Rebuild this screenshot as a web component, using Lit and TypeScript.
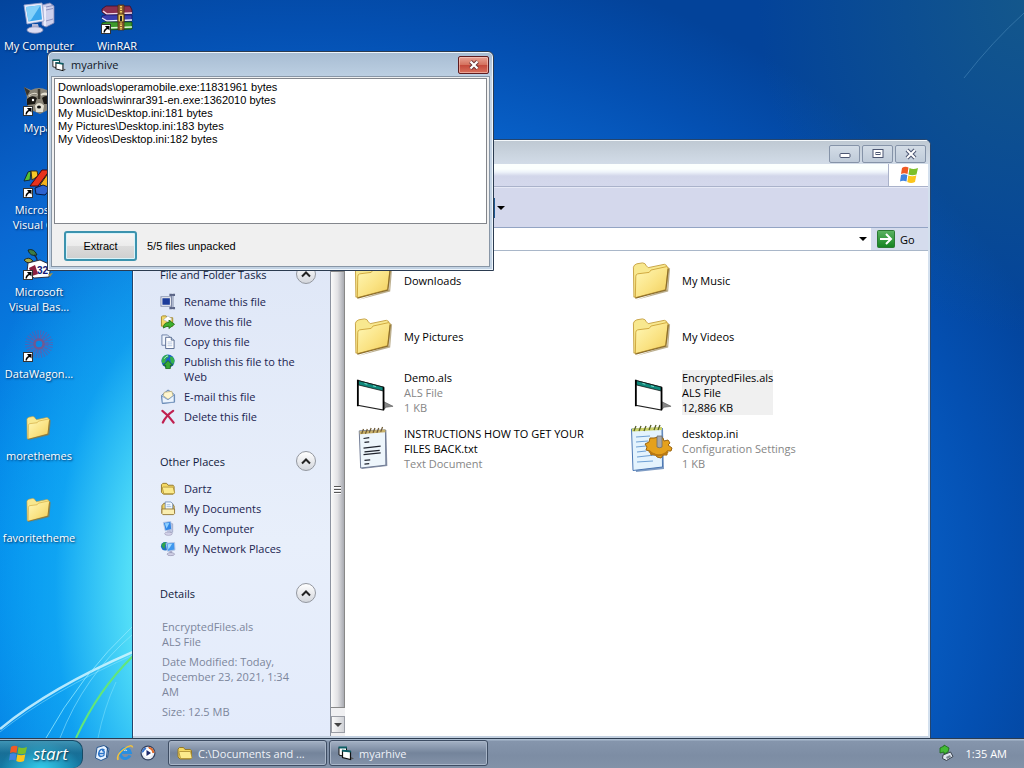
import { LitElement, html, css, svg, nothing } from "lit";
import { customElement, property, state } from "lit/decorators.js";
import { classMap } from "lit/directives/class-map.js";

/* ---------- icon drawings ---------- */

const folderBig = svg`
  <defs><linearGradient id="fb" x1="0" y1="0" x2="1" y2="1">
    <stop offset="0" stop-color="#fff8b8"/><stop offset=".55" stop-color="#fae384"/><stop offset="1" stop-color="#f0cc58"/>
  </linearGradient></defs>
  <path d="M4 43 L38 34 L40 10 L37 8 L37 32 Z" fill="#8f7a45" opacity=".6"/>
  <path d="M2 40 L1.500 8.500 Q2 6 5 5 L11 4 Q14 4 15 7 L17 9 L34 5.500 Q37 6 37 9 L35 31 Z" fill="#f8e88f" stroke="#c7a244" stroke-width="1"/>
  <path d="M3.500 40.500 L4 18 Q4 16 6 15.500 L18 14 L20 11.500 L36 8 Q38 8 38 10 L35.500 32 Z" fill="url(#fb)" stroke="#cfa63c" stroke-width="1"/>
  <path d="M3.500 41 L35.500 32.500 L38 10" fill="none" stroke="#8c6e2c" stroke-width="1.300"/>`;

const icons: Record<string, { box: string; art: unknown }> = {
  folder: { box: "0 0 42 45", art: folderBig },
  als: {
    box: "0 0 42 45",
    art: svg`
      <path d="M31 32 L41 37 L34 38 L31 40 Z" fill="#888" stroke="#555" stroke-width=".6"/>
      <path d="M4 10 L31 17 V41 L4 36 Z" fill="#fff" stroke="#222" stroke-width="1.200"/>
      <path d="M4.500 10 L31 17 V21 L4.500 14.500 Z" fill="#10897c" stroke="#111" stroke-width=".8"/>
      <path d="M11 13 l3 .8 M20 15.500 l3 .8" stroke="#7fe0d0" stroke-width="1"/>
      <path d="M4 9 V37 M31 17 V41" stroke="#000" stroke-width="1.800"/>`,
  },
  txt: {
    box: "0 0 42 45",
    art: svg`
      <path d="M7 4 L34 3 L35 41 L8 44 Z" fill="#8a93a8"/>
      <path d="M5.500 4 L33 3 L33.500 40 L7 43 Z" fill="#eef6fc" stroke="#6a7690"/>
      <path d="M6 6 L33 4" stroke="#c8b069" stroke-width="3"/>
      <path d="M8 7 l2 -5 M12 7 l2 -5 M16 6 l2 -5 M20 6 l2 -5 M24 6 l2 -5 M28 5 l2 -5" stroke="#6d5a36" stroke-width="1.300"/>
      <path d="M10 12 l6 -1 M11 16 l5 -.5 M10 22 l18 -2 M11 26 l16 -1.500 M10 29 l18 -2 M11 35 l6 -.5 M11 39 l5 -.5" stroke="#20242e" stroke-width="1.300"/>`,
  },
  ini: {
    box: "0 0 46 48",
    art: svg`
      <path d="M4 5 L34 4 L35 45 L7 48 Z" fill="#7f9cc4"/>
      <path d="M2.500 5 L33 4 L33.500 43 L4 46.500 Z" fill="#e4f3fd" stroke="#4c78b4"/>
      <path d="M3 6 L33 4.500" stroke="#cdd46a" stroke-width="3"/>
      <path d="M5 7 l2 -5 M10 7 l2 -5 M15 7 l2 -5 M20 6 l2 -5 M25 6 l2 -5 M29 6 l2 -5" stroke="#58602a" stroke-width="1.300"/>
      <path d="M7 13 l14 -1 M7 18 l12 -1 M7 23 l10 -1 M8 28 l9 -1 M8 33 l18 -2 M8 38 l16 -1" stroke="#6fa0d4" stroke-width="1.200"/>
      <path d="M30 13 l4 1 1 3 4 -1 2 3 -2 2 4 3 -1 3 -4 0 0 4 -4 0 -2 3 -4 -1 -2 -3 -4 1 -1 -4 -4 -1 1 -3 -2 -3 4 -2 1 -4 4 0 Z" fill="#e5a11c" stroke="#9a6410"/>
      <path d="M20 27 q8 8 19 1" stroke="#b87812" stroke-width="2" fill="none"/>
      <path d="M28 12 h5 v11 q-2.500 1.500 -5 0 Z" fill="#a9a9a9" stroke="#6c6c6c" stroke-width=".8"/>`,
  },
  rename: {
    box: "0 0 16 16",
    art: svg`<rect x=".5" y="3" width="11" height="10" fill="#fff" stroke="#7f8aa8"/><rect x="2" y="4.500" width="8" height="7" fill="#1c3c9a"/>
      <path d="M9.500 1 h2 l1 1 1 -1 h2 M12.500 2 v12 M9.500 15 h2 l1 -1 1 1 h2" fill="none" stroke="#5b6587" stroke-width="2.400"/>
      <path d="M12.500 2 v12" stroke="#d8def0" stroke-width="1"/>`,
  },
  move: {
    box: "0 0 16 16",
    art: svg`<path d="M1 13 V3 l1 -1 h4 l1 2 h6 v9 Z" fill="#f1d766" stroke="#a58a2c"/><path d="M3 6 L8 2 l4 3 -3 4 Z" fill="#fff" stroke="#9aa4b4" stroke-width=".6"/>
      <path d="M3 15 q0 -6 6 -6 v-2.500 l6 4.500 -6 4.500 V13 q-3 0 -6 2 Z" fill="#3fb02e" stroke="#19640f" stroke-width=".8"/>`,
  },
  copy: {
    box: "0 0 16 16",
    art: svg`<path d="M1.500 1 h6 l2 2 v9 h-8 Z" fill="#eef4fd" stroke="#6c7fa4"/><path d="M5.500 3.500 h6 l3 3 v9 h-9 Z" fill="#fff" stroke="#54678e"/>
      <path d="M11.500 3.500 v3 h3" fill="#cfdcf0" stroke="#54678e"/><path d="M7.500 8.500 h5 M7.500 10.500 h5 M7.500 12.500 h5" stroke="#b3c4df"/>`,
  },
  globe: {
    box: "0 0 16 16",
    art: svg`<circle cx="8" cy="7.500" r="7" fill="#1e62c8"/><path d="M2 4 q3 -4 6 -3 l1 2 -3 2 -1 4 -3 1 q-1.500 -3 0 -6 Z M10 3 l3 0 2 4 -1 4 -3 -2 Z" fill="#35b24a"/>
      <path d="M4 5 q2 -3 4 -3" stroke="#b8e8ff" fill="none"/><path d="M8 7 l5 5 h-2.500 v3.500 h-5 V12 H3 Z" fill="#36a832" stroke="#125f12" stroke-width=".8"/>`,
  },
  mail: {
    box: "0 0 16 16",
    art: svg`<path d="M1 7 L8 1 l7 5 v8 L2 15.500 Z" fill="#c7dcf5" stroke="#5a7fae"/><path d="M3 7 l1 -3.500 8 -1 1.500 5 L8 11 Z" fill="#fff6cf" stroke="#b0a06a" stroke-width=".7"/>
      <path d="M1.500 7.500 L8 11.500 l6.500 -5 V14 L2 15 Z" fill="#eaf3fd" stroke="#6b8cb8" stroke-width=".8"/>`,
  },
  delete: {
    box: "0 0 16 16",
    art: svg`<path d="M2 2 Q9 7 14 14.500 M13.500 2 Q6 7 2.500 14.500" fill="none" stroke="#c02050" stroke-width="2.400" stroke-linecap="round"/>`,
  },
  folderSmall: {
    box: "0 0 16 16",
    art: svg`<path d="M1 12 V4 l1.500 -1.500 h4 L8 4.500 h5.500 L14.500 6 v7 l-1 1 H3 Z" fill="#f4d964" stroke="#93782a"/>
      <path d="M3.500 13.500 L2 7.500 q0 -1 1 -1 h10.500 l1.500 6 -1 1 Z" fill="#fbea8c" stroke="#a88a30" stroke-width=".8"/>`,
  },
  documents: {
    box: "0 0 16 16",
    art: svg`<path d="M1.500 13 V5 l2 -2.500 h9 l2 3 V13 Z" fill="#eccf62" stroke="#8a7030"/><path d="M5 10 V1 h6 l2 2 v8 Z" fill="#f6fbff" stroke="#6d8cba" stroke-width=".9"/>
      <path d="M6.500 4 h4 M6.500 6 h5" stroke="#9dbbe2"/><path d="M1.500 8.500 h13.500 v5 l-1 1 H2.500 l-1 -1 Z" fill="#faeeb0" stroke="#94793a"/>`,
  },
  computerSmall: {
    box: "0 0 16 16",
    art: svg`<path d="M9 2 l4 1 v9 l-3 1 Z" fill="#c2c8e2" stroke="#8a90b0" stroke-width=".6"/><path d="M3 1.500 l8 -1 1 8.500 -7 1.500 Z" fill="#2f86e6" stroke="#b9c7e4"/>
      <path d="M4.500 2.500 l5 -.5 -3 6 Z" fill="#8fd0ff"/><ellipse cx="8.500" cy="13.500" rx="4" ry="1.800" fill="#d6d4ea" stroke="#8f8dab" stroke-width=".6"/><path d="M7 10 h3 v3 h-3 Z" fill="#b9bbd6"/>`,
  },
  network: {
    box: "0 0 16 16",
    art: svg`<circle cx="5" cy="5.500" r="4.500" fill="#1d6fc4"/><path d="M1 5 q1 -4 5 -3.500 l-1 3 -1 4 Z" fill="#2fa54a"/>
      <path d="M6 2.500 l9 -1 .5 8 -8 1.500 Z" fill="#3f97ee" stroke="#b7c5e2"/><path d="M7.500 3.500 l5 -.5 -4 6 Z" fill="#a4dcff"/><path d="M9.500 10.500 h3 v3 h-3 Z" fill="#aeb0cc"/><ellipse cx="11" cy="14" rx="4" ry="1.600" fill="#d0d0e6" stroke="#8886a4" stroke-width=".6"/>`,
  },
  form: {
    box: "0 0 16 16",
    art: svg`<path d="M1 2.500 H8.500 V12 L1 10 Z" fill="#fff" stroke="#111"/><path d="M4.500 5.500 L12.500 6.500 V14.500 L4.500 12.500 Z" fill="#fff" stroke="#111" stroke-width="1.200"/>
      <path d="M.5 2.500 h8.500 M4 5.500 l9 1.200" stroke="#0c5f66" stroke-width="1.800"/><path d="M13 12 l3 1.500 -3 1 Z" fill="#555"/>`,
  },
  flag: {
    box: "0 0 20 20",
    art: svg`<path d="M3 3 Q6 1 9.500 2.500 L8.500 9 Q5 7.500 2 9 Z" fill="#f05a24"/><path d="M10.500 3 Q14 5 19 3 L17.500 9.500 Q13 11 9.500 9.500 Z" fill="#7bbf2a"/>
      <path d="M2 10 Q5 8.500 8.300 10 L7.500 16.500 Q4 15 1 16.500 Z" fill="#3f83e0"/><path d="M9.300 10.500 Q13 12 17.300 10.500 L16 17 Q12 19 8.300 17 Z" fill="#fbc51c"/>`,
  },
  mailDoc: {
    box: "0 0 16 16",
    art: svg`<path d="M3 2.500 L10 .5 l5 3 -1.500 9 L7 15.500 1.500 13 Z" fill="#e8f3ff" stroke="#2a5a94"/><path d="M10.500 5 q-3 -2 -5 1 q-2 4 1 5.500 q3 0 4 -2 M5.500 8.500 h4.500 q1 -3 -2 -3" fill="none" stroke="#2c74c8" stroke-width="1.500"/><path d="M12 1.500 l1.500 2 -1 9" fill="none" stroke="#274f80" stroke-width="1.200"/>`,
  },
  ie: {
    box: "0 0 16 16",
    art: svg`<path d="M13 10.500 a5 5 0 1 1 .3 -3 H5" fill="none" stroke="#2a8fe0" stroke-width="3"/><path d="M7 5.500 q1.500 -1 3 0" stroke="#c8ecff" fill="none"/><path d="M1 15 Q-1 10 7 4 Q15 -1.500 15.500 2.500" fill="none" stroke="#f3c23a" stroke-width="1.500"/>`,
  },
  player: {
    box: "0 0 16 16",
    art: svg`<circle cx="8" cy="8" r="7.500" fill="#33415f"/><circle cx="8" cy="8" r="6.300" fill="#e9edf6"/><path d="M8 1.700 a6.300 6.300 0 0 1 6.300 6.300 h-3 Z" fill="#e06a2a"/><path d="M1.700 8 a6.300 6.300 0 0 1 4 -5.800 l1 3 Z" fill="#3d78d0"/>
      <circle cx="8" cy="8" r="4.300" fill="#fff"/><path d="M6.500 5 L11 8 l-4.500 3 Z" fill="#1d2a6c"/>`,
  },
  usb: {
    box: "0 0 16 16",
    art: svg`<path d="M5 10 l7.500 -3 2.500 4.500 -6.500 4 -4 -2 Z" fill="#dfe6ee" stroke="#39414c"/><path d="M8 12 l4 -2 1 2 -4 2 Z" fill="#7c8792"/><path d="M2 8 V3 L6 1 V0 L11 3 10 7 6 9 V7 Z" fill="#43bb35" stroke="#1b6a15" stroke-width=".8"/>`,
  },
  go: {
    box: "0 0 18 18",
    art: svg`<defs><linearGradient id="gg" x1="0" y1="0" x2="0" y2="1"><stop offset="0" stop-color="#5db463"/><stop offset="1" stop-color="#138320"/></linearGradient></defs>
      <rect x=".5" y=".5" width="17" height="17" rx="1" fill="url(#gg)" stroke="#2b7a33"/><path d="M3 9 h11 M9 4 l5 5 -5 5" fill="none" stroke="#fff" stroke-width="2"/>`,
  },
  computer: {
    box: "0 0 32 32",
    art: svg`<path d="M19 3 L27 1 l4 3 v17 l-8 4 -4 -2 Z" fill="#cdd0ec" stroke="#8186b4" stroke-width=".8"/><path d="M23 5 l7 -1.500 M23 8 l7 -1.500 M23 19 l7 -2" stroke="#8d92bf"/>
      <path d="M22 5 V24" stroke="#f4f5ff" stroke-width="1.500"/><path d="M1 3 L19 1 l2 18 -17 3 Z" fill="#e9ecfb" stroke="#9aa4cc" stroke-width=".8"/><path d="M3 5 L17.500 3.300 19 17.500 5.500 19.500 Z" fill="#3aa6ec"/><path d="M3 5 L17.500 3.300 8 18 5.500 19.500 Z" fill="#86d2fa"/>
      <path d="M9 22 h6 l1 4 h-7 Z" fill="#b4b7d6"/><ellipse cx="12" cy="28" rx="8" ry="3.200" fill="#dcdcf2" stroke="#9093b8" stroke-width=".8"/>`,
  },
  winrar: {
    box: "0 0 32 32",
    art: svg`<path d="M1 7 L5 4 H29 L31 8 V12 L5 13 1 10 Z" fill="#8a3050" stroke="#3c0d28" stroke-width=".8"/><path d="M2 9 l4 3 L31 11" stroke="#f0d8e8" fill="none" stroke-width="1.500"/>
      <path d="M1 14 L5 13 H31 V19 L6 20 1 17 Z" fill="#3b3fae" stroke="#14186c" stroke-width=".8"/><path d="M1 16 l5 3 L31 18" stroke="#e6ecff" fill="none" stroke-width="1.300"/>
      <path d="M1 21 L5 20 H31 V27 L6 28 1 25 Z" fill="#3d9a2c" stroke="#16480e" stroke-width=".8"/><path d="M1 23 l5 3 L31 25" stroke="#d8f5d0" fill="none" stroke-width="1.300"/>
      <path d="M17 3 h6 v25 h-6 Z" fill="#8a5a30" stroke="#4e3010" stroke-width=".8"/><path d="M20 4 v8 M20 20 v8" stroke="#f0d060" stroke-width="2" stroke-dasharray="1.500 1"/><rect x="17" y="12" width="6" height="8" rx="1" fill="#e8c860" stroke="#4e3010"/><rect x="19" y="14" width="2" height="5" fill="#222"/>`,
  },
  raccoon: {
    box: "0 0 32 32",
    art: svg`<path d="M1 3 l7 3 q8 -4 16 0 l7 -4 -2 12 q2 8 -4 12 l-8 4 -9 -4 Q2 20 4 13 Z" fill="#8a8578"/><path d="M1 3 l6 4 -3 5 Z M31 2 l-7 5 3 4 Z" fill="#38342c"/>
      <path d="M4 15 q5 -5 10 -1 l-2 6 -8 1 Z M28 14 q-5 -4 -9 0 l2 6 7 0 Z" fill="#1a1814"/><path d="M6 12 q5 -4 9 -1 M26 11 q-4 -3 -8 0 M13 22 q3 -4 7 0 l-1 5 -5 0 Z" stroke="#e4e0d2" stroke-width="2" fill="#e4e0d2"/><path d="M6 12 q5 -4 9 -1 Z" fill="#8a8578"/><circle cx="10" cy="16" r="1.200" fill="#fff"/><ellipse cx="16" cy="23" rx="2" ry="1.500" fill="#111"/><path d="M16 5 v10" stroke="#3e3a30" stroke-width="2.500"/>`,
  },
  studio: {
    box: "0 0 32 32",
    art: svg`<path d="M1 15 L5 6 L8 5 L7 14 Z" fill="#57c234" stroke="#123" stroke-width=".9"/><path d="M8 5 H14 L15 10 L9 14 Z" fill="#f8c828" stroke="#321" stroke-width=".9"/>
      <path d="M7 20 L19 4 H27 L15 20 Z" fill="#e8321c" stroke="#400" stroke-width=".9"/><path d="M17 19 l9 -13 5 3 v8 l-6 5 Z" fill="#f6b21c" stroke="#420" stroke-width=".9"/><path d="M12 22 l8 -3 8 3 -6 7 -9 -1 Z" fill="#2d63d0" stroke="#013" stroke-width=".9"/>`,
  },
  install: {
    box: "0 0 32 32",
    art: svg`<path d="M5 2 q6 -2 9 5 q-7 2 -9 -5 Z" fill="#3e7d45" stroke="#122" stroke-width=".9"/><path d="M1 12 q5 -4 9 1 q-5 4 -9 -1 Z" fill="#a9a944" stroke="#221" stroke-width=".9"/><path d="M11 7 q4 3 3 8" fill="none" stroke="#223" stroke-width="1.300"/>
      <path d="M5 15 l12 -3 11 5 -2 12 -15 1 -7 -6 Z" fill="#fff" stroke="#223" stroke-width=".9"/><path d="M6 20 l6 -3 3 9 -6 2 Z" fill="#8c1f3e"/><path d="M25 26 l5 -1 -3 4 Z" fill="#a09048"/><text x="14" y="26" font-size="10" font-weight="bold" fill="#101878" font-family="Liberation Sans, sans-serif">32</text>`,
  },
  wagon: {
    box: "0 0 32 32",
    art: svg`<g fill="none" stroke="#8a4a90" opacity=".5"><circle cx="16" cy="14" r="11.500" stroke-width="5" stroke-dasharray="1 1.500"/><circle cx="16" cy="14" r="7.500" stroke-width="4" stroke-dasharray="2 1"/></g><circle cx="16" cy="14" r="4.500" fill="none" stroke="#b43a5c" stroke-width="2.500" opacity=".6"/>`,
  },
};

const icon = (name: string, cls = "") => html`
  <svg class="icon ${cls}" viewBox=${icons[name].box} aria-hidden="true">${icons[name].art}</svg>`;

const base = css`
  * { box-sizing: border-box; }
  button, input, textarea { font: inherit; color: inherit; margin: 0; padding: 0; border: 0; }
  p, h1, h2, ul { margin: 0; padding: 0; font: inherit; list-style: none; }
  a { color: inherit; text-decoration: none; }
  .icon { display: block; flex: none; overflow: visible; }
`;

/* ---------- desktop shortcut ---------- */

@customElement("desktop-icon")
export class DesktopIcon extends LitElement {
  @property() label = "";
  @property() glyph = "";
  @property({ type: Boolean }) shortcut = false;

  static styles = [base, css`
    .link { display: flex; flex-direction: column; align-items: center; gap: 4px; color: #fff; text-align: center; }
    .art { position: relative; width: 32px; height: 32px; display: flex; align-items: center; justify-content: center; }
    .pic { width: 32px; height: 32px; }
    .pic.folder { width: 26px; height: 28px; }
    .arrow { position: absolute; left: 0; bottom: 0; width: 10px; height: 10px; background: #fff; border: 1px solid #333; }
    .text { white-space: pre-line; line-height: 15px; text-shadow: 1px 1px 2px rgba(0, 20, 60, .8); }
  `];

  render() {
    return html`<a class="link" href="#">
      <span class="art">
        ${icon(this.glyph, `pic ${this.glyph}`)}
        ${this.shortcut ? html`<svg class="arrow" viewBox="0 0 8 8"><path d="M1.500 7.500 Q1.500 4 4.500 3 L3 1 H7.500 V5.500 L6 4 Q3 5 3 7.500 Z" fill="#000"/></svg>` : nothing}
      </span>
      <span class="text">${this.label}</span>
    </a>`;
  }
}

/* ---------- explorer window ---------- */

interface Entry { icon: string; name: string; meta?: string[]; selected?: boolean; }

@customElement("explorer-window")
export class ExplorerWindow extends LitElement {
  @state() private closed = new Set<string>();

  private tasks = [
    ["rename", "Rename this file"], ["move", "Move this file"], ["copy", "Copy this file"],
    ["globe", "Publish this file to the Web"], ["mail", "E-mail this file"], ["delete", "Delete this file"],
  ];
  private places = [
    ["folderSmall", "Dartz"], ["documents", "My Documents"], ["computerSmall", "My Computer"], ["network", "My Network Places"],
  ];
  private files: Entry[] = [
    { icon: "folder", name: "Downloads" },
    { icon: "folder", name: "My Music" },
    { icon: "folder", name: "My Pictures" },
    { icon: "folder", name: "My Videos" },
    { icon: "als", name: "Demo.als", meta: ["ALS File", "1 KB"] },
    { icon: "als", name: "EncryptedFiles.als", meta: ["ALS File", "12,886 KB"], selected: true },
    { icon: "txt", name: "INSTRUCTIONS HOW TO GET YOUR FILES BACK.txt", meta: ["Text Document"] },
    { icon: "ini", name: "desktop.ini", meta: ["Configuration Settings", "1 KB"] },
  ];

  static styles = [base, css`
    :host { display: flex; flex-direction: column; background: #d3d9eb; border: 1px solid #24456e; border-bottom: 0; border-radius: 6px 6px 0 0; overflow: hidden; color: #000; }
    .title { display: flex; justify-content: flex-end; gap: 2px; height: 24px; padding: 4px 4px 0 0; border-top: 1px solid #f4f8fb; background: linear-gradient(#bfc9d3, #d2dce8); }
    .cap { width: 31px; height: 18px; display: grid; place-items: center; background: linear-gradient(#d3dce6, #bfcbd9); border: 1px solid #8593a8; border-radius: 2px; }
    .cap svg { width: 14px; height: 12px; display: block; }
    .main { flex: 1; min-height: 0; display: flex; flex-direction: column; border-right: 2px solid #d3e0ee; border-bottom: 2px solid #c3d0e0; }
    .menu { display: flex; justify-content: flex-end; height: 23px; border-bottom: 1px solid #aab2ca; background: linear-gradient(#fbfffe 0 5px, #eef3fa 8px, #d2d6ea 12px, #d4d8ec); }
    .brand { width: 40px; background: #fff; border-left: 1px solid #aab2ca; display: grid; place-items: center; }
    .brand svg { width: 20px; height: 20px; }
    .tools { height: 41px; display: flex; align-items: center; padding-left: 359px; background: #d4d8ec; border-bottom: 1px solid #93a4c4; border-top: 1px solid #e6e9f6; }
    .views { width: 16px; height: 20px; background: none; display: flex; align-items: center; border-left: 3px solid #1f5a94; }
    .tri { margin-left: 2px; border: 4px solid transparent; border-top-color: #000; border-bottom: 0; }
    .bar { display: flex; height: 23px; border-bottom: 1px solid #a9b7c9; background: #d5dced; }
    .field { flex: 1; display: flex; align-items: center; background: #fff; padding-right: 4px; }
    .field input { flex: 1; min-width: 0; background: none; outline: none; }
    .go { width: 57px; display: flex; align-items: center; gap: 5px; padding-left: 6px; background: none; }
    .go svg { width: 18px; height: 18px; }
    .body { flex: 1; min-height: 0; display: flex; background: #fff; }
    .side { width: 197px; flex: none; overflow: hidden; padding: 13px 14px 0 27px; background: linear-gradient(#dfe7f7, #e8effb 60%, #e3ebfb); color: #1a2450; box-shadow: inset 1px 0 #f4f8ff; }
    .head { display: flex; justify-content: space-between; align-items: center; width: 100%; height: 20px; color: #101a3c; }
    .chev { width: 20px; height: 20px; border-radius: 50%; background: linear-gradient(#fff, #d3d6dc); border: 1px solid #93979f; display: grid; place-items: center; }
    .chev svg { width: 10px; height: 8px; }
    .chev.shut svg { transform: rotate(180deg); }
    .list { display: flex; flex-direction: column; gap: 5px; padding: 10px 8px 27px 0; line-height: 15px; }
    .item { display: flex; gap: 8px; }
    .item .icon { width: 16px; height: 15px; }
    .info { color: #7c869c; padding-left: 2px; padding-top: 16px; }
    .scroll { width: 15px; flex: none; display: flex; flex-direction: column; background: #f0f0f2; border-left: 1px solid #8c93a0; }
    .thumb { flex: 1; display: grid; place-items: center; background: linear-gradient(90deg, #fafafa, #e2e2e5 50%, #a9abb2); border: solid #888; border-width: 1px 1px 1px 0; }
    .grip { width: 7px; height: 8px; background: repeating-linear-gradient(#555 0 1px, #fff 1px 2px, #e2e2e5 2px 3px); }
    .step { height: 17px; background: linear-gradient(90deg, #fafafa, #cfd1d6); border: 1px solid #9a9da5; display: grid; place-items: center; }
    .up { margin-bottom: 3px; }
    .up .tri { transform: rotate(180deg); }
    .down { margin: 8px 0 3px; }
    .step .tri { margin: 0; border-width: 4px 4px 0; border-top-color: #444; }
    .files { flex: 1; min-width: 0; display: grid; grid-template-columns: repeat(auto-fill, 278px); grid-auto-rows: 56px; align-content: start; padding: 1px 0 0 5px; line-height: 15px; }
    .file { display: flex; align-items: center; gap: 6px; }
    .slot { width: 48px; height: 48px; display: grid; place-items: center; }
    .slot .icon { width: 40px; height: 43px; }
    .slot .ini { width: 46px; height: 48px; }
    .name { max-width: 200px; }
    .meta { color: #868686; }
    .selected .name { background: #f0f0f0; }
    .selected .meta { color: #000; }
  `];

  private toggle(name: string) {
    const next = new Set(this.closed);
    next.has(name) ? next.delete(name) : next.add(name);
    this.closed = next;
  }

  private group(name: string, content: unknown) {
    const shut = this.closed.has(name);
    return html`<section>
      <h2 class="head">${name}
        <button class="chev ${classMap({ shut })}" aria-label="Toggle ${name}" @click=${() => this.toggle(name)}>
          <svg viewBox="0 0 10 8"><path d="M1 6.500 L5 2.500 L9 6.500" fill="none" stroke="#222" stroke-width="2"/></svg>
        </button>
      </h2>
      ${shut ? nothing : content}
    </section>`;
  }

  private links(rows: string[][]) {
    return html`<ul class="list">${rows.map(([g, t]) => html`<li><a class="item" href="#">${icon(g)}<span>${t}</span></a></li>`)}</ul>`;
  }

  render() {
    return html`
      <header class="title">
        <button class="cap" aria-label="Minimize"><svg viewBox="0 0 14 12"><rect x="2" y="5.500" width="10" height="4" rx="1" fill="#fff" stroke="#4c5672"/></svg></button>
        <button class="cap" aria-label="Restore"><svg viewBox="0 0 14 12"><rect x="2" y="1.500" width="10" height="8" fill="#fff" stroke="#4c5672"/><rect x="5" y="4.500" width="4" height="2" fill="#fff" stroke="#4c5672"/></svg></button>
        <button class="cap" aria-label="Close"><svg viewBox="0 0 14 12"><path d="M3 2 L11 10 M11 2 L3 10" stroke="#4c5672" stroke-width="4"/><path d="M3 2 L11 10 M11 2 L3 10" stroke="#fff" stroke-width="2"/></svg></button>
      </header>
      <div class="main">
        <div class="menu"><span class="brand">${icon("flag")}</span></div>
        <div class="tools"><button class="views" aria-label="Views"><span class="tri"></span></button></div>
        <div class="bar">
          <div class="field"><input aria-label="Address" /><span class="tri"></span></div>
          <button class="go">${icon("go")}<span>Go</span></button>
        </div>
        <div class="body">
          <aside class="side">
            ${this.group("File and Folder Tasks", this.links(this.tasks))}
            ${this.group("Other Places", this.links(this.places))}
            ${this.group("Details", html`<div class="list info">
              <p>EncryptedFiles.als<br />ALS File</p>
              <p>Date Modified: Today, December 23, 2021, 1:34 AM</p>
              <p>Size: 12.5 MB</p>
            </div>`)}
          </aside>
          <div class="scroll">
            <button class="step up" aria-label="Scroll up"><span class="tri"></span></button>
            <div class="thumb"><span class="grip"></span></div>
            <button class="step down" aria-label="Scroll down"><span class="tri"></span></button>
          </div>
          <div class="files">
            ${this.files.map((f) => html`<div class="file ${classMap({ selected: !!f.selected })}">
              <span class="slot">${icon(f.icon, f.icon)}</span>
              <div class="name"><p>${f.name}</p>${f.meta?.map((m) => html`<p class="meta">${m}</p>`)}</div>
            </div>`)}
          </div>
        </div>
      </div>`;
  }
}

/* ---------- archive extractor dialog ---------- */

@customElement("archive-dialog")
export class ArchiveDialog extends LitElement {
  private lines = [
    "Downloads\\operamobile.exe:11831961 bytes",
    "Downloads\\winrar391-en.exe:1362010 bytes",
    "My Music\\Desktop.ini:181 bytes",
    "My Pictures\\Desktop.ini:183 bytes",
    "My Videos\\Desktop.ini:182 bytes",
  ];

  static styles = [base, css`
    :host { display: flex; flex-direction: column; border: 1px solid #2b3b50; border-radius: 6px 6px 0 0; overflow: hidden; background: #c3d3e4; box-shadow: inset 0 0 0 1px #eef5fb; }
    .title { display: flex; align-items: center; gap: 5px; height: 23px; margin: 1px 1px 0; padding: 0 3px; border-radius: 4px 4px 0 0; background: linear-gradient(#a8bdd3, #bccfe2); }
    .title .icon { width: 14px; height: 14px; }
    .title h1 { flex: 1; color: #101828; }
    .close { width: 31px; height: 18px; display: grid; place-items: center; border: 1px solid #5e1c20; border-radius: 2px; background: linear-gradient(#e8a294, #d4705c 50%, #c4483a 50%, #d8705c); box-shadow: inset 0 0 0 1px rgba(255, 220, 210, .5); }
    .close svg { width: 12px; height: 10px; }
    .client { flex: 1; min-height: 0; margin: 0 3px 3px; padding: 1px 2px 0; display: flex; flex-direction: column; background: #f0f0f0; border: 1px solid #8896a6; font: 11px/13px "Liberation Sans", Arial, sans-serif; color: #000; }
    .log { flex: 1; resize: none; outline: none; padding: 2px 3px; background: #fff; border: 1px solid #83868c; overflow: hidden; white-space: pre; }
    .foot { display: flex; align-items: center; gap: 10px; height: 42px; padding: 2px 10px 0; }
    .extract { width: 73px; height: 30px; border: 2px solid #3c93ae; border-radius: 3px; background: linear-gradient(#f6f6f6, #ebebeb 50%, #dcdcdc 50%, #cfcfcf); box-shadow: inset 0 0 0 1px #d8f4fb; }
  `];

  render() {
    return html`
      <header class="title">
        ${icon("form")}
        <h1>myarhive</h1>
        <button class="close" aria-label="Close"><svg viewBox="0 0 12 10"><path d="M2.500 1.500 L9.500 8.500 M9.500 1.500 L2.500 8.500" stroke="#6a3438" stroke-width="4"/><path d="M2.500 1.500 L9.500 8.500 M9.500 1.500 L2.500 8.500" stroke="#fff" stroke-width="2.200"/></svg></button>
      </header>
      <div class="client">
        <textarea class="log" readonly aria-label="Unpacked files" .value=${this.lines.join("\n")}></textarea>
        <div class="foot"><button class="extract">Extract</button><span>5/5 files unpacked</span></div>
      </div>`;
  }
}

/* ---------- taskbar ---------- */

@customElement("task-bar")
export class TaskBar extends LitElement {
  static styles = [base, css`
    :host { display: flex; align-items: center; height: 30px; color: #fff; background: linear-gradient(#2c3c50 0 1px, #a9bace 1px 2px, #8595ac 3px, #7d8da4 60%, #8292a8); }
    .start { align-self: flex-end; width: 83px; height: 28px; display: flex; align-items: center; gap: 5px; padding: 0 0 2px 8px; border-radius: 0 10px 10px 0; border: 1px solid #174a66; border-left: 0; border-bottom: 0; background: radial-gradient(ellipse at 50% 110%, #35d0ee, rgba(30, 150, 190, .3) 70%), linear-gradient(#4d93b0, #155e86 45%, #0f6c98); font: italic 17px/20px "Open Sans", "Noto Sans", sans-serif; text-shadow: 1px 1px 2px #06324a; }
    .start .icon { width: 20px; height: 20px; }
    .quick { display: flex; gap: 7px; padding: 0 11px; }
    .quick .icon { width: 16px; height: 16px; }
    .quick a { display: block; }
    .tasks { flex: 1; display: flex; gap: 2px; min-width: 0; padding-left: 1px; }
    .task { width: 159px; height: 26px; display: flex; align-items: center; gap: 5px; padding: 0 8px; border: 1px solid #3e4d63; border-radius: 3px; box-shadow: inset 0 0 0 1px #a9b6c8; background: linear-gradient(#a4b1c4, #74849b 50%, #8493a9); color: #eef2f8; }
    .task .icon { width: 16px; height: 16px; }
    .tray { display: flex; align-items: center; gap: 12px; padding-right: 17px; }
    .tray .icon { width: 16px; height: 16px; }
  `];

  render() {
    return html`
      <button class="start">${icon("flag")}<span>start</span></button>
      <nav class="quick">
        <a href="#" aria-label="Mail">${icon("mailDoc")}</a>
        <a href="#" aria-label="Internet Explorer">${icon("ie")}</a>
        <a href="#" aria-label="Media Player">${icon("player")}</a>
      </nav>
      <div class="tasks">
        <button class="task">${icon("folderSmall")}<span>C:\\Documents and ...</span></button>
        <button class="task">${icon("form")}<span>myarhive</span></button>
      </div>
      <div class="tray">${icon("usb")}<time>1:35 AM</time></div>`;
  }
}

/* ---------- desktop ---------- */

@customElement("app-root")
export class AppRoot extends LitElement {
  private shortcuts = [
    { label: "My Computer", glyph: "computer", shortcut: false },
    { label: "Mypal", glyph: "raccoon", shortcut: true },
    { label: "Microsoft\nVisual C++", glyph: "studio", shortcut: true },
    { label: "Microsoft\nVisual Bas...", glyph: "install", shortcut: true },
    { label: "DataWagon...", glyph: "wagon", shortcut: true },
    { label: "morethemes", glyph: "folder", shortcut: false },
    { label: "favoritetheme", glyph: "folder", shortcut: false },
  ];

  static styles = [base, css`
    :host { display: flex; flex-direction: column; height: 100vh; overflow: hidden; font: 11px/15px "Open Sans", "Noto Sans", sans-serif; }
    .desk {
      position: relative; flex: 1; min-height: 0; overflow: hidden;
      background:
        radial-gradient(ellipse 26% 45% at 100% 0, rgba(30, 100, 130, .6), transparent),
        radial-gradient(ellipse 22% 62% at 19% 80%, #84f2f8 0, rgba(90, 228, 248, .9) 30%, rgba(30, 180, 245, .5) 62%, transparent 100%),
        radial-gradient(ellipse 78% 86% at 30% 78%, #00a8f8 0, #0092f0 34%, #0a68d2 66%, #0450b2 86%, #03439a 100%);
    }
    .rays { position: absolute; inset: auto auto 0 0; width: 133px; height: 180px; }
    .beam { position: absolute; inset: 0 0 auto auto; width: 80px; height: 100px; }
    .icons { position: absolute; inset: 0 auto auto 0; display: flex; }
    .col { display: grid; grid-auto-rows: 82px; width: 78px; padding-top: 2px; align-content: start; }
    explorer-window { position: absolute; inset: 139px 93px 0 132px; }
    archive-dialog { position: absolute; left: 47px; top: 51px; width: 447px; height: 220px; }
    task-bar { flex: none; }
  `];

  render() {
    return html`
      <main class="desk">
        <svg class="rays" viewBox="0 0 133 180" fill="none" aria-hidden="true">
          <path d="M0 171 Q50 130 133 94" stroke="#d2f6ff" stroke-width="2.500" opacity=".85"/>
          <path d="M0 174 Q50 134 133 97" stroke="#8fe6ff" stroke-width="1" opacity=".5"/>
          <path d="M46 180 Q80 118 133 68" stroke="#8fe8ff" opacity=".8"/>
          <path d="M60 180 Q84 118 133 76" stroke="#a8f0ff" opacity=".5"/>
          <path d="M76 180 Q98 132 133 98" stroke="#62e67a" stroke-width="2"/>
          <path d="M98 180 Q104 150 116 124" stroke="#9cf0ff" opacity=".4"/>
        </svg>
        <svg class="beam" viewBox="0 0 80 100" fill="none" aria-hidden="true">
          <path d="M80 13 Q48 42 20 78" stroke="#7fb8e0" opacity=".3"/>
        </svg>
        <div class="icons">
          <div class="col">${this.shortcuts.map((s) => html`<desktop-icon .label=${s.label} .glyph=${s.glyph} .shortcut=${s.shortcut}></desktop-icon>`)}</div>
          <div class="col"><desktop-icon label="WinRAR" glyph="winrar" shortcut></desktop-icon></div>
        </div>
        <explorer-window></explorer-window>
        <archive-dialog></archive-dialog>
      </main>
      <task-bar></task-bar>`;
  }
}
